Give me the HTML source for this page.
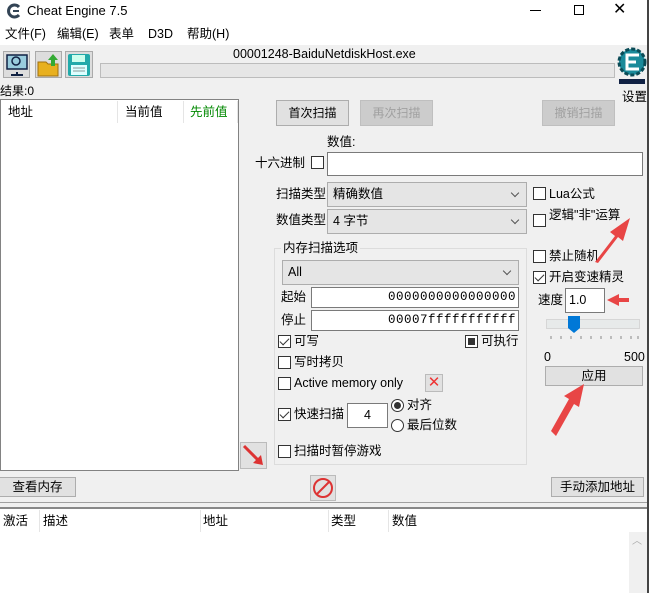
<!DOCTYPE html>
<html><head><meta charset="utf-8"><style>
*{box-sizing:border-box;margin:0;padding:0}
body{width:649px;height:593px;overflow:hidden;background:#f0f0f0;font-family:"Liberation Sans","Noto Sans CJK SC",sans-serif;font-size:12px;color:#000;position:relative}
.a{position:absolute;white-space:nowrap;line-height:15px}
.btn{position:absolute;background:#e1e1e1;border:1px solid #adadad;text-align:center;font-size:12px}
.dis{color:#a0a0a0;background:#ccc;border-color:#bfbfbf}
.cb{position:absolute;width:13px;height:13px;border:1px solid #333;background:#fff}
.cb.on::after{content:"";position:absolute;left:3px;top:0px;width:4px;height:8px;border:solid #333;border-width:0 1.5px 1.5px 0;transform:rotate(45deg)}
.inp{position:absolute;background:#fff;border:1px solid #7a7a7a}
.cmb{position:absolute;background:#e5e5e5;border:1px solid #adadad;padding-left:5px}
.cmb::after{content:"";position:absolute;right:8px;top:7px;width:5px;height:5px;border:solid #555;border-width:0 1px 1px 0;transform:rotate(45deg)}
.rd{position:absolute;width:13px;height:13px;border:1px solid #333;border-radius:50%;background:#fff}
</style></head><body>
<div class="a" style="left:0;top:0;width:649px;height:45px;background:#fff"></div>
<div class="a" style="left:647px;top:0;width:2px;height:593px;background:#444"></div>
<svg class="a" style="left:6px;top:3px" width="16" height="16" viewBox="0 0 16 16"><path d="M13 4A6 6 0 1 0 13 12" fill="none" stroke="#345" stroke-width="3"/><path d="M7 8h6" stroke="#345" stroke-width="2"/></svg>
<div class="a" style="left:27px;top:3px;font-size:13px">Cheat Engine 7.5</div>
<div class="a" style="left:530px;top:10px;width:11px;height:1px;background:#000"></div>
<div class="a" style="left:574px;top:5px;width:10px;height:10px;border:1px solid #000"></div>
<div class="a" style="left:613px;top:2px;font-size:16px">✕</div>
<div class="a" style="left:5px;top:27px;font-size:12.5px">文件(F)</div>
<div class="a" style="left:57px;top:27px;font-size:12.5px">编辑(E)</div>
<div class="a" style="left:109px;top:27px;font-size:12.5px">表单</div>
<div class="a" style="left:148px;top:27px;font-size:12.5px">D3D</div>
<div class="a" style="left:187px;top:27px;font-size:12.5px">帮助(H)</div>
<!-- toolbar -->
<div class="a" style="left:3px;top:51px;width:27px;height:27px;background:#ddd;border:1px solid #aaa"></div>
<svg class="a" style="left:4px;top:52px" width="26" height="26"><rect x="3" y="3" width="20" height="14" fill="#9cd" stroke="#124" stroke-width="1.5"/><circle cx="12" cy="9" r="4" fill="none" stroke="#124" stroke-width="1.5"/><path d="M13 20v3M7 23h12" stroke="#124" stroke-width="2"/></svg>
<div class="a" style="left:35px;top:51px;width:27px;height:27px;background:#ddd;border:1px solid #aaa"></div>
<svg class="a" style="left:36px;top:52px" width="26" height="26"><path d="M2 10h8l2 2h10v12H2z" fill="#e8b020" stroke="#a07010"/><path d="M17 2l-5 6h3v6h4V8h3z" fill="#3a3"/></svg>
<div class="a" style="left:65px;top:51px;width:28px;height:27px;background:#ddd;border:1px solid #aaa"></div>
<svg class="a" style="left:66px;top:52px" width="26" height="26"><rect x="2" y="2" width="22" height="22" rx="2" fill="#2aa"/><rect x="6" y="3" width="13" height="7" fill="#cfe"/><rect x="5" y="13" width="16" height="10" fill="#dff"/><path d="M7 16h12M7 19h12" stroke="#899"/></svg>
<div class="a" style="left:233px;top:47px;font-size:12.5px">00001248-BaiduNetdiskHost.exe</div>
<div class="a" style="left:100px;top:63px;width:515px;height:15px;background:#e6e6e6;border:1px solid #bcbcbc"></div>
<svg class="a" style="left:617px;top:45px" width="30" height="42"><circle cx="15" cy="17" r="13" fill="#1a8a9a" stroke="#0b4b56" stroke-width="3" stroke-dasharray="4 2"/><path d="M22 10H10v14h12M10 17h9" fill="none" stroke="#fff" stroke-width="3"/><rect x="2" y="34" width="26" height="5" fill="#124"/></svg>
<div class="a" style="left:622px;top:90px;font-size:12.5px">设置</div>
<div class="a" style="left:0;top:84px;font-size:12px">结果:0</div>
<!-- list -->
<div class="a" style="left:0;top:99px;width:239px;height:372px;background:#fff;border:1px solid #828282"></div>
<div class="a" style="left:8px;top:105px;font-size:12.5px">地址</div>
<div class="a" style="left:117px;top:101px;width:1px;height:22px;background:#e5e5e5"></div>
<div class="a" style="left:125px;top:105px;font-size:12.5px">当前值</div>
<div class="a" style="left:183px;top:101px;width:1px;height:22px;background:#e5e5e5"></div>
<div class="a" style="left:190px;top:105px;font-size:12.5px;color:#080">先前值</div>
<div class="a" style="left:237px;top:101px;width:1px;height:22px;background:#e5e5e5"></div>
<!-- buttons -->
<div class="btn" style="left:276px;top:100px;width:73px;height:26px;line-height:24px">首次扫描</div>
<div class="btn dis" style="left:360px;top:100px;width:73px;height:26px;line-height:24px">再次扫描</div>
<div class="btn dis" style="left:542px;top:100px;width:73px;height:26px;line-height:24px">撤销扫描</div>
<div class="a" style="left:327px;top:135px;font-size:12.5px">数值:</div>
<div class="a" style="left:255px;top:156px;font-size:12.5px">十六进制</div>
<div class="cb" style="left:311px;top:156px"></div>
<div class="inp" style="left:327px;top:152px;width:316px;height:24px"></div>
<div class="a" style="left:276px;top:187px;font-size:12.5px">扫描类型</div>
<div class="cmb" style="left:327px;top:182px;width:200px;height:25px;line-height:23px;font-size:12.5px">精确数值</div>
<div class="a" style="left:276px;top:213px;font-size:12.5px">数值类型</div>
<div class="cmb" style="left:327px;top:209px;width:200px;height:25px;line-height:23px;font-size:12.5px">4 字节</div>
<div class="cb" style="left:533px;top:187px"></div><div class="a" style="left:549px;top:187px;font-size:12.5px">Lua公式</div>
<div class="cb" style="left:533px;top:214px"></div><div class="a" style="left:549px;top:208px;font-size:12.5px">逻辑"非"运算</div>
<!-- group -->
<div class="a" style="left:274px;top:248px;width:253px;height:217px;border:1px solid #dcdcdc"></div>
<div class="a" style="left:281px;top:241px;background:#f0f0f0;padding:0 2px;font-size:12.5px">内存扫描选项</div>
<div class="cmb" style="left:282px;top:260px;width:237px;height:25px;line-height:23px;font-size:12.5px">All</div>
<div class="a" style="left:281px;top:290px;font-size:12.5px">起始</div>
<div class="inp" style="left:311px;top:287px;width:208px;height:21px;text-align:right;padding-right:2px;font-family:'Liberation Mono',monospace;font-size:12.5px;line-height:19px;letter-spacing:0.5px">0000000000000000</div>
<div class="a" style="left:281px;top:313px;font-size:12.5px">停止</div>
<div class="inp" style="left:311px;top:310px;width:208px;height:21px;text-align:right;padding-right:2px;font-family:'Liberation Mono',monospace;font-size:12.5px;line-height:19px;letter-spacing:0.5px">00007fffffffffff</div>
<div class="cb on" style="left:278px;top:335px"></div><div class="a" style="left:294px;top:334px;font-size:12.5px">可写</div>
<div class="cb" style="left:465px;top:335px"><div style="margin:2px;width:7px;height:7px;background:#333"></div></div><div class="a" style="left:481px;top:334px;font-size:12.5px">可执行</div>
<div class="cb" style="left:278px;top:356px"></div><div class="a" style="left:294px;top:355px;font-size:12.5px">写时拷贝</div>
<div class="cb" style="left:278px;top:377px"></div><div class="a" style="left:294px;top:376px;font-size:12.5px">Active memory only</div>
<div class="a" style="left:425px;top:374px;width:18px;height:18px;background:#e1e1e1;border:1px solid #bbb;color:#e33;font-size:15px;line-height:15px;text-align:center">✕</div>
<div class="cb on" style="left:278px;top:408px"></div><div class="a" style="left:294px;top:407px;font-size:12.5px">快速扫描</div>
<div class="inp" style="left:347px;top:403px;width:41px;height:25px;text-align:center;line-height:23px;font-size:12.5px">4</div>
<div class="rd" style="left:391px;top:399px"><div style="margin:2px;width:7px;height:7px;border-radius:50%;background:#333"></div></div><div class="a" style="left:407px;top:398px;font-size:12.5px">对齐</div>
<div class="rd" style="left:391px;top:419px"></div><div class="a" style="left:407px;top:418px;font-size:12.5px">最后位数</div>
<div class="cb" style="left:278px;top:445px"></div><div class="a" style="left:294px;top:444px;font-size:12.5px">扫描时暂停游戏</div>
<div class="a" style="left:240px;top:442px;width:27px;height:27px;background:#e1e1e1;border:1px solid #bbb"></div>
<svg class="a" style="left:240px;top:442px" width="27" height="27"><path d="M4 4L20 20" stroke="#d33" stroke-width="3"/><path d="M23 23l-10-2 8-8z" fill="#d33"/></svg>
<!-- right -->
<div class="cb" style="left:533px;top:250px"></div><div class="a" style="left:549px;top:249px;font-size:12.5px">禁止随机</div>
<div class="cb on" style="left:533px;top:271px"></div><div class="a" style="left:549px;top:270px;font-size:12.5px">开启变速精灵</div>
<div class="a" style="left:538px;top:293px;font-size:12.5px">速度</div>
<div class="inp" style="left:565px;top:288px;width:40px;height:25px;line-height:23px;padding-left:3px;font-size:12.5px">1.0</div>
<div class="a" style="left:546px;top:319px;width:94px;height:10px;background:#e7eaea;border:1px solid #d6d6d6"></div>
<svg class="a" style="left:568px;top:316px" width="12" height="18"><path d="M0 0h12v12l-6 5-6-5z" fill="#0078d7"/></svg>
<svg class="a" style="left:550px;top:336px" width="90" height="4"><path d="M1 0v3M11 0v3M21 0v3M31 0v3M41 0v3M51 0v3M61 0v3M71 0v3M81 0v3M88 0v3" stroke="#888"/></svg>
<div class="a" style="left:544px;top:350px;font-size:12.5px">0</div>
<div class="a" style="left:624px;top:350px;font-size:12.5px">500</div>
<div class="btn" style="left:545px;top:366px;width:98px;height:20px;line-height:18px;font-size:12.5px">应用</div>
<!-- annotation arrows -->
<svg class="a" style="left:0;top:0" width="649" height="593">
<g fill="#e84545">
<path d="M595 262l20-26-5-4 20-14-7 23-5-4-20 26z"/>
<path d="M607 300l12-6v4h10v4h-10v4z"/>
<path d="M551 431l18-32-5-3 20-12-5 23-5-3-18 32z"/>
</g></svg>
<!-- bottom -->
<div class="btn" style="left:-1px;top:477px;width:77px;height:20px;line-height:18px;font-size:12.5px">查看内存</div>
<div class="a" style="left:310px;top:475px;width:26px;height:26px;background:#e1e1e1;border:1px solid #bbb"></div>
<svg class="a" style="left:310px;top:475px" width="26" height="26"><circle cx="13" cy="13" r="9" fill="none" stroke="#d33" stroke-width="2"/><path d="M7 19L19 7" stroke="#d33" stroke-width="2"/></svg>
<div class="btn" style="left:551px;top:477px;width:93px;height:20px;line-height:18px;font-size:12.5px">手动添加地址</div>
<div class="a" style="left:0;top:502px;width:647px;height:1px;background:#a0a0a0"></div>
<div class="a" style="left:0;top:507px;width:647px;height:2px;background:#888"></div>
<div class="a" style="left:308px;top:502px;font-size:5px;color:#888;letter-spacing:1px">•••••••</div>
<div class="a" style="left:0;top:509px;width:647px;height:84px;background:#fff"></div>
<div class="a" style="left:3px;top:514px;font-size:12.5px">激活</div>
<div class="a" style="left:39px;top:510px;width:1px;height:22px;background:#e5e5e5"></div>
<div class="a" style="left:43px;top:514px;font-size:12.5px">描述</div>
<div class="a" style="left:200px;top:510px;width:1px;height:22px;background:#e5e5e5"></div>
<div class="a" style="left:203px;top:514px;font-size:12.5px">地址</div>
<div class="a" style="left:328px;top:510px;width:1px;height:22px;background:#e5e5e5"></div>
<div class="a" style="left:331px;top:514px;font-size:12.5px">类型</div>
<div class="a" style="left:388px;top:510px;width:1px;height:22px;background:#e5e5e5"></div>
<div class="a" style="left:392px;top:514px;font-size:12.5px">数值</div>
<div class="a" style="left:629px;top:532px;width:18px;height:61px;background:#f0f0f0"></div>
<div class="a" style="left:632px;top:534px;font-size:10px;color:#aaa">︿</div>
</body></html>
